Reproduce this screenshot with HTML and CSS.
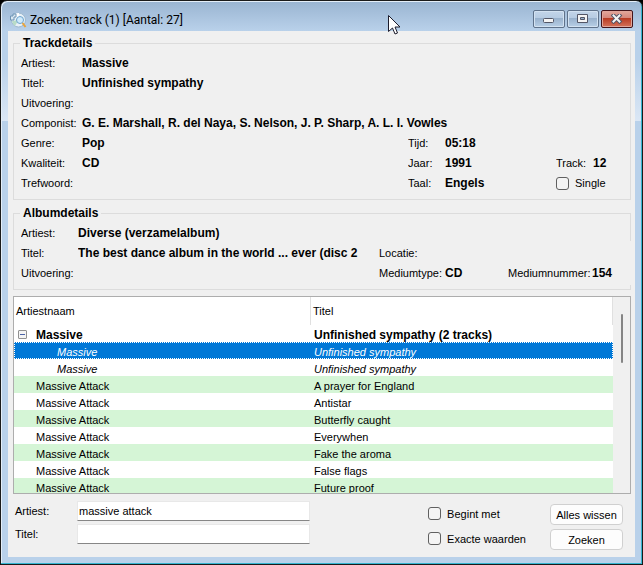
FILE: index.html
```html
<!DOCTYPE html>
<html lang="nl">
<head>
    <meta charset="UTF-8">
    <meta name="viewport" content="width=device-width, initial-scale=1.0">
    <title>Zoeken: track (1) [Aantal: 27]</title>
    <link rel="stylesheet" href="styles.css">
</head>
<body>
    <div class="window">
        <header class="titlebar">
            <svg class="app-icon" width="17" height="16" viewBox="0 0 17 16">
                <circle cx="8.500" cy="8" r="7" fill="#e8f0f7" stroke="#9db9cf"/>
                <path d="M8.500 8 L4 2.500 A7 7 0 0 1 9 1 Z" fill="#ffffff"/>
                <path d="M8.500 8 L2 9 A7 7 0 0 0 5 14 Z" fill="#b9dcc8"/>
                <path d="M.5 8 V4 H3 V2 H6 V5 H4 V8 Z" fill="#dbe8f2" stroke="#6f94b4"/>
                <circle cx="10" cy="8" r="3.500" fill="#cfeafb" stroke="#6ea3cc"/>
                <path d="M12.500 11 L15.500 15" stroke="#e8a33c" stroke-width="2"/>
            </svg>
            <h1>Zoeken: track (1) [Aantal: 27]</h1>
            <div class="window-buttons">
                <button class="win-btn" aria-label="Minimaliseren">
                    <svg width="12" height="10" viewBox="0 0 12 10"><rect x=".5" y="4.500" width="10" height="4" rx="1" fill="#f4f4f4" stroke="#535666"/></svg>
                </button>
                <button class="win-btn" aria-label="Maximaliseren">
                    <svg width="12" height="10" viewBox="0 0 12 10"><path d="M.5 .5 h10 v8 h-10 z M3.500 3.500 v2 h4 v-2 z" fill="#f4f4f4" fill-rule="evenodd" stroke="#535666"/></svg>
                </button>
                <button class="win-btn close" aria-label="Sluiten">
                    <svg width="12" height="10" viewBox="0 0 12 10">
                        <path d="M2.500 1.500 L8.500 7.500 M8.500 1.500 L2.500 7.500" stroke="#535666" stroke-width="4" stroke-linecap="square"/>
                        <path d="M2.500 1.500 L8.500 7.500 M8.500 1.500 L2.500 7.500" stroke="#f4f4f4" stroke-width="2" stroke-linecap="square"/>
                    </svg>
                </button>
            </div>
        </header>

        <main class="client">
            <fieldset class="group">
                <legend>Trackdetails</legend>
                <div class="track-grid">
                    <span>Artiest:</span><b class="wide">Massive</b>
                    <span>Titel:</span><b class="wide">Unfinished sympathy</b>
                    <span>Uitvoering:</span><b class="wide"></b>
                    <span>Componist:</span><b class="wide">G. E. Marshall, R. del Naya, S. Nelson, J. P. Sharp, A. L. I. Vowles</b>
                    <span>Genre:</span><b>Pop</b>
                    <span>Tijd:</span><b>05:18</b><span></span><b></b>
                    <span>Kwaliteit:</span><b>CD</b>
                    <span>Jaar:</span><b>1991</b>
                    <span>Track:</span><b>12</b>
                    <span>Trefwoord:</span><b></b>
                    <span>Taal:</span><b>Engels</b>
                    <label class="check single"><input type="checkbox">Single</label>
                </div>
            </fieldset>

            <fieldset class="group album">
                <legend>Albumdetails</legend>
                <div class="album-grid">
                    <span>Artiest:</span><b>Diverse (verzamelalbum)</b>
                    <span>Titel:</span><b>The best dance album in the world ... ever (disc 2</b>
                    <span>Uitvoering:</span><b></b>
                    <div class="medium">
                        <span>Locatie:</span><b class="wide"></b>
                        <span>Mediumtype:</span><b>CD</b>
                        <span>Mediumnummer:</span><b>154</b>
                    </div>
                </div>
            </fieldset>

            <section class="list">
                <div class="list-view">
                    <table>
                        <thead>
                            <tr><th class="artist-col">Artiestnaam</th><th>Titel</th></tr>
                        </thead>
                        <tbody>
                            <tr class="parent">
                                <td><button class="toggle" aria-label="Inklappen"></button>Massive</td>
                                <td>Unfinished sympathy (2 tracks)</td>
                            </tr>
                            <tr class="child selected"><td>Massive</td><td>Unfinished sympathy</td></tr>
                            <tr class="child"><td>Massive</td><td>Unfinished sympathy</td></tr>
                            <tr class="green"><td>Massive Attack</td><td>A prayer for England</td></tr>
                            <tr><td>Massive Attack</td><td>Antistar</td></tr>
                            <tr class="green"><td>Massive Attack</td><td>Butterfly caught</td></tr>
                            <tr><td>Massive Attack</td><td>Everywhen</td></tr>
                            <tr class="green"><td>Massive Attack</td><td>Fake the aroma</td></tr>
                            <tr><td>Massive Attack</td><td>False flags</td></tr>
                            <tr class="green"><td>Massive Attack</td><td>Future proof</td></tr>
                        </tbody>
                    </table>
                </div>
                <div class="scrollbar"><div class="thumb"></div></div>
            </section>

            <form class="search">
                <div class="fields">
                    <label for="artist">Artiest:</label>
                    <input type="text" id="artist" value="massive attack">
                    <label for="title">Titel:</label>
                    <input type="text" id="title">
                </div>
                <div class="options">
                    <label class="check"><input type="checkbox">Begint met</label>
                    <label class="check"><input type="checkbox">Exacte waarden</label>
                </div>
                <div class="actions">
                    <button type="reset" class="btn">Alles wissen</button>
                    <button type="button" class="btn">Zoeken</button>
                </div>
            </form>
        </main>
    </div>

    <svg class="cursor" width="13" height="20" viewBox="0 0 13 20">
        <path d="M.5 .5 V16.500 L4.500 13 L7 19 L9.500 18 L7 12 H12 Z" fill="#ffffff" stroke="#1c1c2c"/>
    </svg>
</body>
</html>
```
FILE: styles.css
```css
* {
    box-sizing: border-box;
}

body {
    margin: 0;
    height: 100vh;
    background: #000000;
    font-family: "Liberation Sans", Arial, sans-serif;
    font-size: 11px;
    color: #000000;
}

b, legend, .parent td {
    font-size: 12px;
    font-weight: bold;
}

button, input {
    font: inherit;
    color: inherit;
    margin: 0;
    padding: 0;
}

/* Window frame */
.window {
    display: flex;
    flex-direction: column;
    height: 100%;
    padding: 1px 7px 7px 7px;
    border: 1px solid #1a1a1a;
    border-radius: 7px 7px 0 0;
    background: linear-gradient(#99b4d1 0, #b9d1ea 30px, #b9d1ea 60px, #dbe7f5 120px, #b9d1ea 120px);
    box-shadow: inset -1px -1px 0 #35b5d0, inset 1px 1px 0 #e4eef8;
}

.titlebar {
    display: flex;
    align-items: center;
    height: 29px;
    flex: none;
    padding: 6px 2px 0 2px;
}

.titlebar h1 {
    flex: 1;
    margin: 0 0 0 3px;
    font-family: Roboto, "Liberation Sans", sans-serif;
    font-size: 12px;
    font-weight: normal;
}

.window-buttons {
    display: flex;
    gap: 2px;
    align-self: flex-start;
    margin-top: 2px;
}

.win-btn {
    display: flex;
    align-items: center;
    justify-content: center;
    width: 32px;
    height: 18px;
    border: 1px solid #5f728a;
    border-radius: 2px;
    background: linear-gradient(#c3d5e9 0, #b6cbe2 45%, #98b1cc 45%, #b8cfe6 100%);
    box-shadow: inset 0 0 0 1px #d3e2f1;
}

.win-btn.close {
    border-color: #43141a;
    background: linear-gradient(#e3a79b 0, #d5867a 45%, #b83a22 45%, #d4735a 100%);
    box-shadow: inset 0 0 0 1px #e0a59a;
}

.client {
    flex: 1;
    min-height: 0;
    display: flex;
    flex-direction: column;
    padding: 5px 4px 7px 5px;
    background: #f0f0f0;
}

/* Details */
.group {
    flex: none;
    margin: 0;
    min-width: 0;
    border: 1px solid #dcdcdc;
    padding: 3px 0 6px 7px;
}

.group legend {
    margin-left: -1px;
    padding: 0 3px;
    line-height: 14px;
}

.group span, .group b {
    line-height: 20px;
    white-space: nowrap;
    overflow: hidden;
}

.track-grid {
    display: grid;
    grid-template-columns: 61px 1fr 37px 111px 37px 37px;
    grid-auto-rows: 20px;
}

.track-grid .wide {
    grid-column: 2 / -1;
}

.single {
    grid-column: 5 / -1;
}

.album {
    margin: 6px 0;
}

.album-grid {
    display: grid;
    grid-template-columns: 57px 1fr 271px;
    grid-template-rows: repeat(3, 20px);
}

.album-grid > span {
    grid-column: 1;
}

.album-grid > b {
    grid-column: 2;
}

/* Panel that runs over the group's right edge */
.medium {
    grid-column: 3;
    grid-row: 2 / 4;
    display: grid;
    grid-template-columns: 66px 63px 84px 1fr;
    margin: -2px -1px -2px 0;
    padding: 2px 0 2px 20px;
    background: #f0f0f0;
}

.medium .wide {
    grid-column: 2 / -1;
}

.check {
    display: flex;
    align-items: center;
    gap: 6px;
}

.check input {
    appearance: none;
    width: 13px;
    height: 13px;
    border: 1px solid #606060;
    border-radius: 3px;
    background: #f4f4f4;
}

/* Result list */
.list {
    flex: 1;
    min-height: 0;
    display: flex;
    border: 1px solid #adadad;
    background: #ffffff;
}

.list-view {
    flex: 1;
    overflow: hidden;
}

.list table {
    width: 100%;
    table-layout: fixed;
    border-collapse: separate;
    border-spacing: 0;
}

.list th {
    height: 28px;
    padding: 0 2px;
    border-right: 1px solid #e0e0e0;
    text-align: left;
    font-weight: normal;
}

.artist-col {
    width: 297px;
}

.list td {
    height: 17px;
    padding: 3px 0 0 3px;
    line-height: 14px;
}

.list td:first-child {
    padding-left: 22px;
}

.list .child td:first-child {
    padding-left: 43px;
}

.list .parent td:first-child {
    padding-left: 4px;
}

.child {
    font-style: italic;
}

.green {
    background: #d5f5d6;
}

.selected {
    background: #0078d7;
    color: #ffffff;
    outline: 1px dotted #ffffff;
    outline-offset: -1px;
}

.toggle {
    width: 9px;
    height: 9px;
    margin-right: 9px;
    border: 1px solid #919191;
    border-radius: 1px;
    background: linear-gradient(#4b63a7, #4b63a7) center / 5px 1px no-repeat #f4f4f4;
    vertical-align: 1px;
}

.scrollbar {
    width: 17px;
    padding-top: 17px;
    background: #f0f0f0;
}

.thumb {
    width: 2px;
    height: 49px;
    margin: 0 auto;
    border-radius: 1px;
    background: #858585;
}

/* Search form */
.search {
    flex: none;
    display: flex;
    align-items: flex-start;
    padding: 7px 8px 0 2px;
}

.fields {
    display: grid;
    grid-template-columns: 62px 233px;
    gap: 3px 0;
    align-items: center;
}

.fields input {
    width: 100%;
    height: 20px;
    padding: 0 1px;
    border: 1px solid #e8e8e8;
    border-bottom-color: #868686;
    background: #ffffff;
}

.options {
    display: flex;
    flex-direction: column;
    gap: 12px;
    margin: 6px 0 0 auto;
}

.actions {
    display: flex;
    flex-direction: column;
    gap: 4px;
    margin: 3px 0 0 24px;
}

.btn {
    width: 73px;
    height: 21px;
    border: 1px solid #d0d0d0;
    border-radius: 4px;
    background: #fdfdfd;
}

/* Mouse pointer */
.cursor {
    position: absolute;
    left: 388px;
    top: 15px;
}
```
